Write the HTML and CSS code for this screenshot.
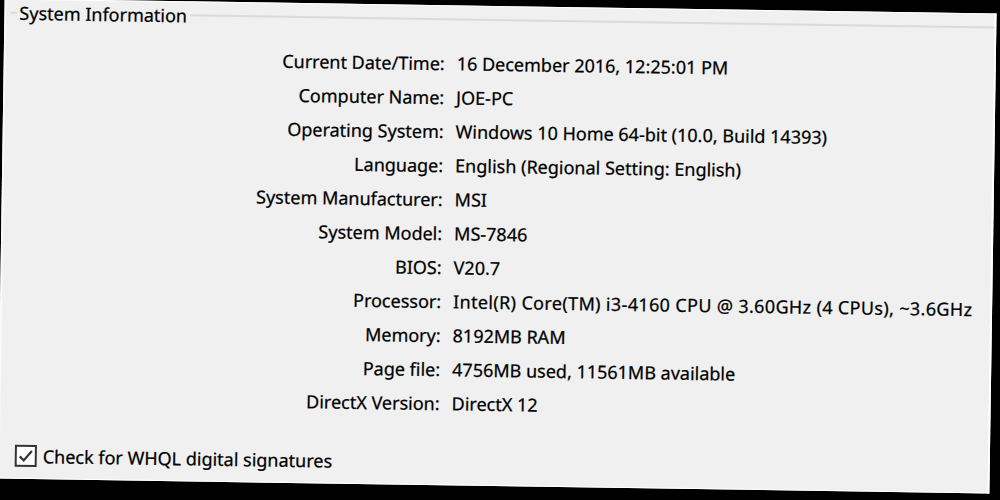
FILE: index.html
```html
<!DOCTYPE html>
<html lang="en">
<head>
    <meta charset="UTF-8">
    <meta name="viewport" content="width=device-width, initial-scale=1.0">
    <title>DirectX Diagnostic Tool - System</title>
    <link rel="stylesheet" href="styles.css">
</head>
<body>
    <div class="dialog">
        <fieldset class="group">
            <legend>System Information</legend>
            <dl class="info">
                <dt>Current Date/Time:</dt>
                <dd>16 December 2016, 12:25:01 PM</dd>
                <dt>Computer Name:</dt>
                <dd>JOE-PC</dd>
                <dt>Operating System:</dt>
                <dd>Windows 10 Home 64-bit (10.0, Build 14393)</dd>
                <dt>Language:</dt>
                <dd>English (Regional Setting: English)</dd>
                <dt>System Manufacturer:</dt>
                <dd>MSI</dd>
                <dt>System Model:</dt>
                <dd>MS-7846</dd>
                <dt>BIOS:</dt>
                <dd>V20.7</dd>
                <dt>Processor:</dt>
                <dd class="wide">Intel(R) Core(TM) i3-4160 CPU @ 3.60GHz (4 CPUs), ~3.6GHz</dd>
                <dt>Memory:</dt>
                <dd>8192MB RAM</dd>
                <dt>Page file:</dt>
                <dd>4756MB used, 11561MB available</dd>
                <dt>DirectX Version:</dt>
                <dd>DirectX 12</dd>
            </dl>
        </fieldset>

        <label class="check">
            <span class="box">
                <svg width="18" height="18" viewBox="0 0 18 18">
                    <path d="M3 9.5 L7 13.5 L15 4" fill="none" stroke="#333" stroke-width="2.2"/>
                </svg>
            </span>
            Check for WHQL digital signatures
        </label>
    </div>
</body>
</html>
```

FILE: styles.css
```css
html, body {
    margin: 0;
    padding: 0;
    height: 100%;
    overflow: hidden;
    background-color: #000;
}

body {
    font-family: "Noto Sans", "Open Sans", sans-serif;
    font-size: 18px;
    color: #000;
    -webkit-text-stroke: 0.25px #000;
}

/* the dialog photo is a little tilted */
.dialog {
    box-sizing: border-box;
    width: 992px;
    height: 480px;
    margin: 6px 0 0 1px;
    background-color: #f0f0f0;
    border-top: 1px solid #fff;
    border-left: 2px solid #fafafa;
    border-right: 2px solid #fff;
    border-bottom: 1px solid #fff;
    transform: rotate(0.86deg);
    display: flex;
    flex-direction: column;
}

.group {
    margin: 0 0 0 4px;
    padding: 14px 0 0 7px;
    border: none;
    border-top: 2px solid #dadada;
    min-width: 0;
}

.group legend {
    padding: 0 3px 0 2px;
    line-height: 26px;
}

.info {
    margin: 0;
    display: grid;
    grid-template-columns: 428px 1fr;
    grid-auto-rows: 34px;
    column-gap: 12px;
    align-items: center;
}

.info dt {
    text-align: right;
    white-space: nowrap;
}

.info dd {
    margin: 0;
    white-space: nowrap;
}

.info .wide {
    letter-spacing: 0.35px;
}

.check {
    margin-top: auto;
    margin-bottom: 9px;
    margin-left: 15px;
    display: flex;
    align-items: center;
    gap: 6px;
    line-height: 26px;
}

.check .box {
    box-sizing: border-box;
    width: 22px;
    height: 22px;
    border: 2px solid #333;
    background-color: #fff;
    display: flex;
    align-items: center;
    justify-content: center;
}
```
